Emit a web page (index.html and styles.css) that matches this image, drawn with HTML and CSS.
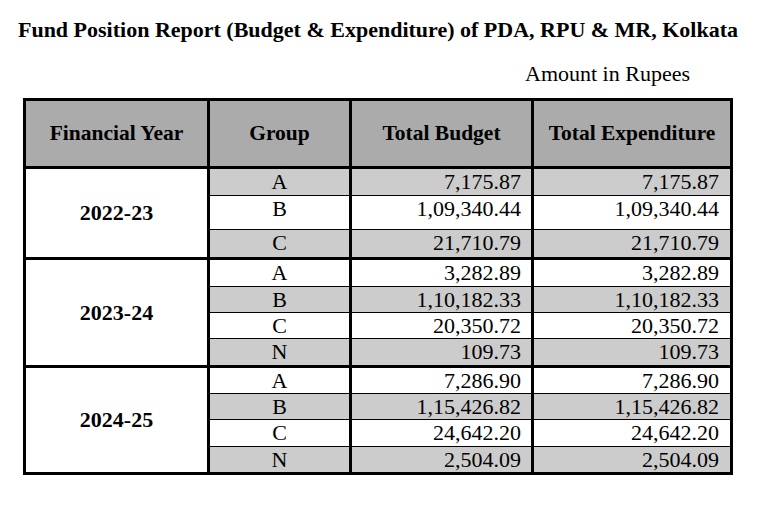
FILE: index.html
```html
<!DOCTYPE html>
<html lang="en">
<head>
<meta charset="utf-8">
<title>Fund Position Report</title>
<link rel="stylesheet" href="styles.css">
</head>
<body>
<div class="report">
  <h1 class="title">Fund Position Report (Budget &amp; Expenditure) of PDA, RPU &amp; MR, Kolkata</h1>
  <div class="unit">Amount in Rupees</div>
  <table class="fund">
    <colgroup>
      <col class="c-year">
      <col class="c-group">
      <col class="c-budget">
      <col class="c-exp">
    </colgroup>
    <thead>
      <tr class="h-head">
        <th>Financial Year</th>
        <th>Group</th>
        <th>Total Budget</th>
        <th>Total Expenditure</th>
      </tr>
    </thead>
    <tbody>
      <tr class="first h28 shade">
        <td class="year" rowspan="3">2022-23</td>
        <td class="grp">A</td><td class="num">7,175.87</td><td class="num exp">7,175.87</td>
      </tr>
      <tr class="h34">
        <td class="grp">B</td><td class="num">1,09,340.44</td><td class="num exp">1,09,340.44</td>
      </tr>
      <tr class="h29 shade">
        <td class="grp">C</td><td class="num">21,710.79</td><td class="num exp">21,710.79</td>
      </tr>

      <tr class="first h28">
        <td class="year" rowspan="4">2023-24</td>
        <td class="grp">A</td><td class="num">3,282.89</td><td class="num exp">3,282.89</td>
      </tr>
      <tr class="h26 shade">
        <td class="grp">B</td><td class="num">1,10,182.33</td><td class="num exp">1,10,182.33</td>
      </tr>
      <tr class="h26">
        <td class="grp">C</td><td class="num">20,350.72</td><td class="num exp">20,350.72</td>
      </tr>
      <tr class="h28 shade">
        <td class="grp">N</td><td class="num">109.73</td><td class="num exp">109.73</td>
      </tr>

      <tr class="first h27">
        <td class="year" rowspan="4">2024-25</td>
        <td class="grp">A</td><td class="num">7,286.90</td><td class="num exp">7,286.90</td>
      </tr>
      <tr class="h26 shade">
        <td class="grp">B</td><td class="num">1,15,426.82</td><td class="num exp">1,15,426.82</td>
      </tr>
      <tr class="h27">
        <td class="grp">C</td><td class="num">24,642.20</td><td class="num exp">24,642.20</td>
      </tr>
      <tr class="h27 shade">
        <td class="grp">N</td><td class="num">2,504.09</td><td class="num exp">2,504.09</td>
      </tr>
    </tbody>
  </table>
</div>
</body>
</html>
```
FILE: styles.css
```css
html, body {
  margin: 0;
  padding: 0;
  background: #ffffff;
}

body {
  font-family: "Liberation Serif", "Times New Roman", serif;
  color: #000;
}

.report {
  width: 710px;
  margin-left: 23px;
  padding-top: 17px;
}

.title {
  display: flex;
  justify-content: center;
  white-space: nowrap;
  margin: 0;
  font-size: 22px;
  line-height: 26px;
  font-weight: bold;
}

.unit {
  display: flex;
  justify-content: flex-end;
  padding-right: 43px;
  margin-top: 18px;
  font-size: 22px;
  line-height: 26px;
}

.fund {
  margin-top: 11px;
  width: 710px;
  table-layout: fixed;
  border-collapse: collapse;
  border: 3px solid #000;
  font-size: 22px;
}

.c-year { width: 184px; }
.c-group { width: 142px; }
.c-budget { width: 182px; }
.c-exp { width: 199px; }

.fund th {
  border: 3px solid #000;
  background: #ababab;
  font-size: 21.5px;
  font-weight: bold;
  text-align: center;
  vertical-align: middle;
  padding: 0;
}

.h-head { height: 68px; }
.h26 { height: 26px; }
.h27 { height: 27px; }
.h28 { height: 28px; }
.h29 { height: 29px; }
.h34 { height: 34px; }

.fund td {
  border-top: 1px solid #000;
  border-bottom: 1px solid #000;
  border-left: 3px solid #000;
  border-right: 3px solid #000;
  padding: 2px 0 0 0;
  line-height: 22px;
  vertical-align: top;
  background: #ffffff;
}

.fund tr.shade td {
  background: #cccccc;
}

.fund tr.first td {
  border-top: 3px solid #000;
}

.fund tbody tr td.year {
  border: 3px solid #000;
  padding: 0;
  background: #ffffff;
  font-weight: bold;
  text-align: center;
  vertical-align: middle;
}

.fund td.grp {
  text-align: center;
}

.fund td.num {
  text-align: right;
  padding-right: 10px;
}

.fund td.exp {
  padding-right: 11px;
}
```
